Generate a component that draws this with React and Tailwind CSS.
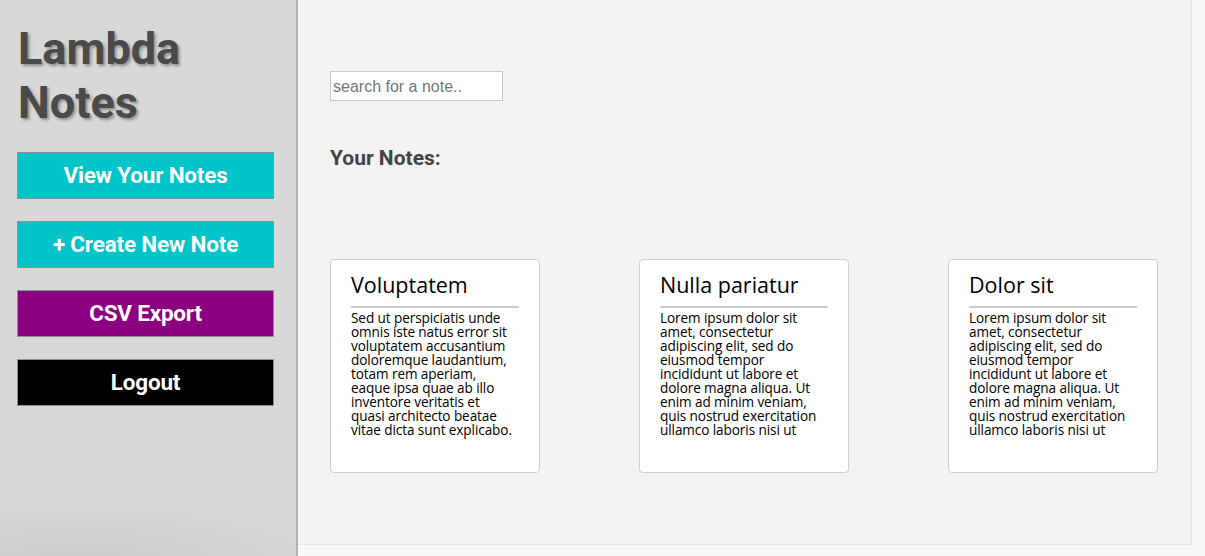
import React, { useState } from 'react';

const notes = [
    {
        title: 'Voluptatem',
        lines: [
            'Sed ut perspiciatis unde',
            'omnis iste natus error sit',
            'voluptatem accusantium',
            'doloremque laudantium,',
            'totam rem aperiam,',
            'eaque ipsa quae ab illo',
            'inventore veritatis et',
            'quasi architecto beatae',
            'vitae dicta sunt explicabo.',
        ],
    },
    {
        title: 'Nulla pariatur',
        lines: [
            'Lorem ipsum dolor sit',
            'amet, consectetur',
            'adipiscing elit, sed do',
            'eiusmod tempor',
            'incididunt ut labore et',
            'dolore magna aliqua. Ut',
            'enim ad minim veniam,',
            'quis nostrud exercitation',
            'ullamco laboris nisi ut',
        ],
    },
    {
        title: 'Dolor sit',
        lines: [
            'Lorem ipsum dolor sit',
            'amet, consectetur',
            'adipiscing elit, sed do',
            'eiusmod tempor',
            'incididunt ut labore et',
            'dolore magna aliqua. Ut',
            'enim ad minim veniam,',
            'quis nostrud exercitation',
            'ullamco laboris nisi ut',
        ],
    },
];

const SideButton = ({ label, color }) => (
    <button
        className={`h-[47px] w-[257px] border border-[#8f8f8f] text-[22.5px] font-bold text-white tracking-[-0.2px] ${color}`}
    >
        {label}
    </button>
);

const NoteCard = ({ note }) => (
    <div className="h-[214px] w-[210px] rounded-[4px] border border-[#cfcfcf] bg-white px-5 pt-[11px]">
        <h3 className="text-[21.5px] leading-[28px] text-black font-['Open_Sans',sans-serif] font-medium">{note.title}</h3>
        <div className="mt-[7px] h-[2px] bg-[#cccccc]"></div>
        <div className="mt-[3px] text-[13.6px] leading-[14px] text-black font-['Open_Sans',sans-serif] tracking-[-0.1px]">
            {note.lines.map((line) => (
                <div key={line} className="whitespace-nowrap">{line}</div>
            ))}
        </div>
    </div>
);

export default function App() {
    const [search, setSearch] = useState('');

    return (
        <div className="flex h-[556px] w-[1205px] overflow-hidden font-['Roboto',sans-serif] bg-[#f8f8f8]">
            <aside className="relative h-full w-[298px] shrink-0 border-r-2 border-[#b1b1b1] bg-[#d8d8d8] pl-[17px] pt-[22px]">
                <div className="pointer-events-none absolute inset-0 bg-[radial-gradient(ellipse_260px_60px_at_80px_560px,rgba(0,0,0,0.06),transparent)]"></div>
                <h1 className="pl-[1px] text-[45px] font-bold leading-[54px] text-[#4a4a4a] [text-shadow:2px_2px_3px_rgba(0,0,0,0.35)]">
                    Lambda
                    <br />
                    Notes
                </h1>
                <div className="mt-[22px] flex flex-col gap-[22px]">
                    <SideButton label="View Your Notes" color="bg-[#00c4c7]" />
                    <SideButton label="+ Create New Note" color="bg-[#00c4c7]" />
                    <SideButton label="CSV Export" color="bg-[#8b0080]" />
                    <SideButton label="Logout" color="bg-black" />
                </div>
            </aside>

            <main className="h-[545px] w-[894px] shrink-0 border-r border-b border-[#e4e4e4] bg-[#f3f3f3] pl-[32px] pt-[71px]">
                <input
                    type="text"
                    value={search}
                    onChange={(e) => setSearch(e.target.value)}
                    placeholder="search for a note.."
                    className="h-[30px] w-[173px] border border-[#c8c8c8] bg-white px-[2px] pt-[1px] text-[16px] font-['Liberation_Sans',sans-serif] text-[#333] placeholder:text-[#757575] outline-none"
                />
                <h2 className="mt-[44px] text-[21px] font-bold leading-[26px] text-[#444]">Your Notes:</h2>
                <div className="mt-[88px] flex gap-[99px]">
                    {notes.map((note) => (
                        <NoteCard key={note.title} note={note} />
                    ))}
                </div>
            </main>
        </div>
    );
}
